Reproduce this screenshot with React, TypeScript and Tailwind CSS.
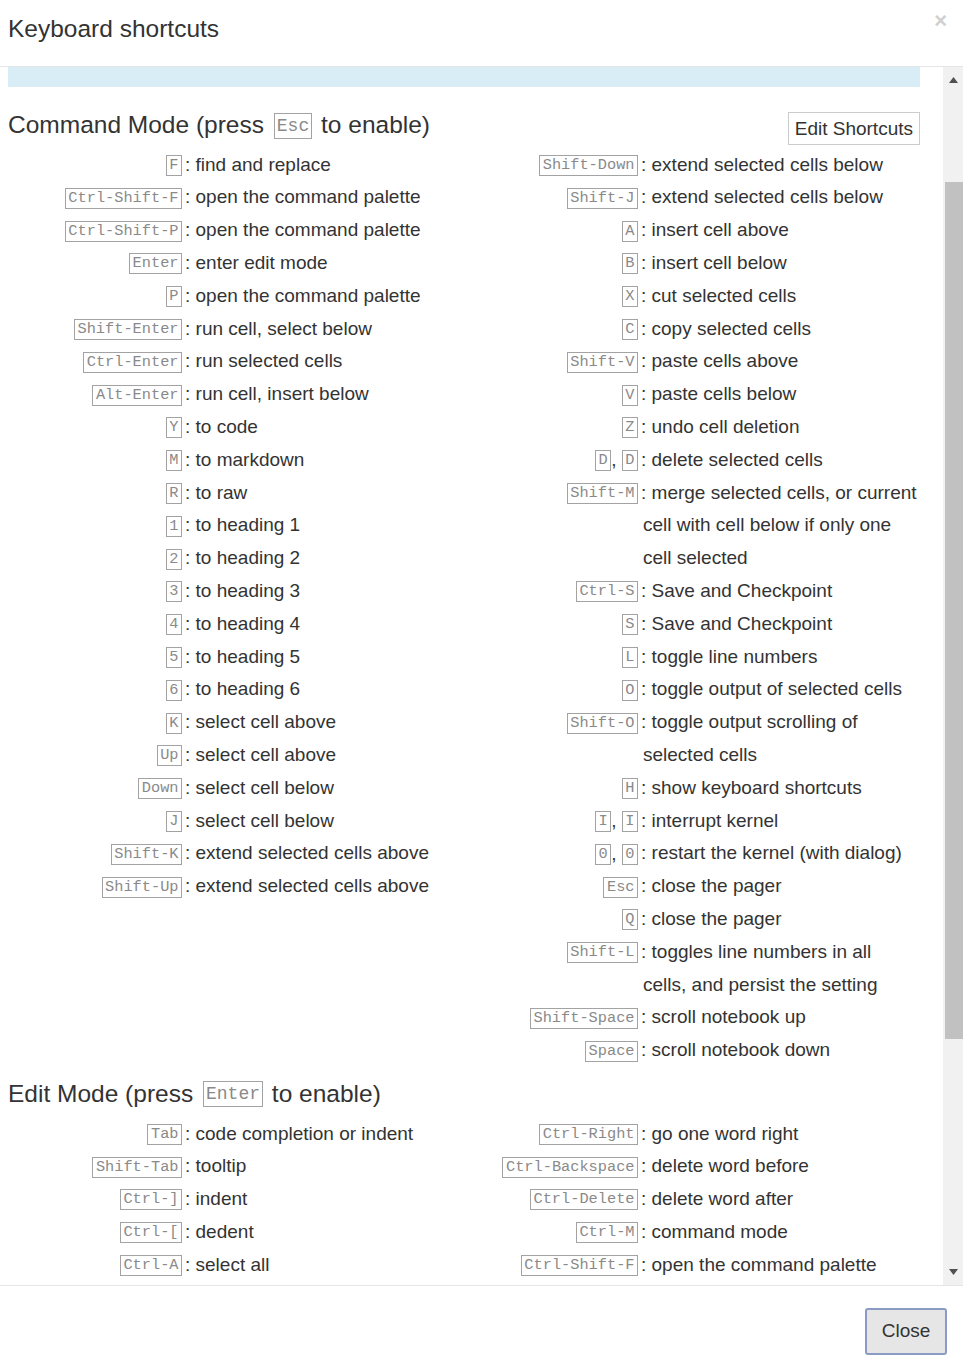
import React from "react";

type Row = { keys: string[]; desc: string[] };

const r = (keys: string[], ...desc: string[]): Row => ({ keys, desc });

const cmdLeft: Row[] = [
  r(["F"], "find and replace"),
  r(["Ctrl-Shift-F"], "open the command palette"),
  r(["Ctrl-Shift-P"], "open the command palette"),
  r(["Enter"], "enter edit mode"),
  r(["P"], "open the command palette"),
  r(["Shift-Enter"], "run cell, select below"),
  r(["Ctrl-Enter"], "run selected cells"),
  r(["Alt-Enter"], "run cell, insert below"),
  r(["Y"], "to code"),
  r(["M"], "to markdown"),
  r(["R"], "to raw"),
  r(["1"], "to heading 1"),
  r(["2"], "to heading 2"),
  r(["3"], "to heading 3"),
  r(["4"], "to heading 4"),
  r(["5"], "to heading 5"),
  r(["6"], "to heading 6"),
  r(["K"], "select cell above"),
  r(["Up"], "select cell above"),
  r(["Down"], "select cell below"),
  r(["J"], "select cell below"),
  r(["Shift-K"], "extend selected cells above"),
  r(["Shift-Up"], "extend selected cells above"),
];

const cmdRight: Row[] = [
  r(["Shift-Down"], "extend selected cells below"),
  r(["Shift-J"], "extend selected cells below"),
  r(["A"], "insert cell above"),
  r(["B"], "insert cell below"),
  r(["X"], "cut selected cells"),
  r(["C"], "copy selected cells"),
  r(["Shift-V"], "paste cells above"),
  r(["V"], "paste cells below"),
  r(["Z"], "undo cell deletion"),
  r(["D", "D"], "delete selected cells"),
  r(["Shift-M"], "merge selected cells, or current", "cell with cell below if only one", "cell selected"),
  r(["Ctrl-S"], "Save and Checkpoint"),
  r(["S"], "Save and Checkpoint"),
  r(["L"], "toggle line numbers"),
  r(["O"], "toggle output of selected cells"),
  r(["Shift-O"], "toggle output scrolling of", "selected cells"),
  r(["H"], "show keyboard shortcuts"),
  r(["I", "I"], "interrupt kernel"),
  r(["0", "0"], "restart the kernel (with dialog)"),
  r(["Esc"], "close the pager"),
  r(["Q"], "close the pager"),
  r(["Shift-L"], "toggles line numbers in all", "cells, and persist the setting"),
  r(["Shift-Space"], "scroll notebook up"),
  r(["Space"], "scroll notebook down"),
];

const editLeft: Row[] = [
  r(["Tab"], "code completion or indent"),
  r(["Shift-Tab"], "tooltip"),
  r(["Ctrl-]"], "indent"),
  r(["Ctrl-["], "dedent"),
  r(["Ctrl-A"], "select all"),
];

const editRight: Row[] = [
  r(["Ctrl-Right"], "go one word right"),
  r(["Ctrl-Backspace"], "delete word before"),
  r(["Ctrl-Delete"], "delete word after"),
  r(["Ctrl-M"], "command mode"),
  r(["Ctrl-Shift-F"], "open the command palette"),
];

const mono = { fontFamily: '"Liberation Mono", "DejaVu Sans Mono", monospace' };

function Kbd({ k }: { k: string }) {
  return (
    <span
      className="inline-block border border-[#a3a3a3] text-[#8a8a8a] text-[15.3px] leading-[19px] px-[2.5px] whitespace-pre"
      style={mono}
    >
      {k}
    </span>
  );
}

function ShortcutRow({ row }: { row: Row }) {
  return (
    <div className="flex">
      <div className="w-[174px] shrink-0 h-[32.8px] flex items-center justify-end pt-[1px]">
        {row.keys.map((k, i) => (
          <React.Fragment key={i}>
            {i > 0 && <span className="text-[#333] text-[19px] whitespace-pre">, </span>}
            <Kbd k={k} />
          </React.Fragment>
        ))}
      </div>
      <div className="flex-1 pl-[3px] flex flex-col text-[19px] text-[#333]">
        {row.desc.map((line, i) => (
          <div key={i} className={"h-[32.8px] leading-[32.8px] whitespace-pre " + (i > 0 ? "pl-[2px]" : "")}>
            {i === 0 ? ": " + line : line}
          </div>
        ))}
      </div>
    </div>
  );
}

function Column({ rows }: { rows: Row[] }) {
  return (
    <div className="w-[456px] flex flex-col">
      {rows.map((row, i) => (
        <ShortcutRow key={i} row={row} />
      ))}
    </div>
  );
}

function HeadKbd({ k }: { k: string }) {
  return (
    <span
      className="inline-block border border-[#a3a3a3] text-[#8a8a8a] text-[18px] leading-[24px] px-[2px] align-middle ml-[3px] mr-[2px] -mt-[2px]"
      style={mono}
    >
      {k}
    </span>
  );
}

export default function App() {
  return (
    <div
      className="w-[963px] h-[1366px] bg-white flex flex-col overflow-hidden"
      style={{ fontFamily: '"Liberation Sans", Arial, sans-serif' }}
    >
      {/* header */}
      <div className="h-[67px] shrink-0 border-b border-[#e5e5e5] flex items-start justify-between pl-[8px] pr-[16px]">
        <div className="mt-[15px] text-[24.5px] leading-[28px] text-[#333]">Keyboard shortcuts</div>
        <div className="mt-[9px] text-[22px] leading-[24px] font-bold text-[#d0d0d0]">×</div>
      </div>

      {/* body */}
      <div className="h-[1219px] shrink-0 flex border-b border-[#e5e5e5]">
        <div className="flex-1 pl-[8px] pr-[22px] overflow-hidden flex flex-col">
          <div className="h-[20px] shrink-0 bg-[#d9edf7] w-[912px]" />

          {/* command mode */}
          <div className="mt-[24px] h-[37.6px] flex items-start justify-between w-[912px]">
            <div className="text-[24.5px] leading-[28px] text-[#333] whitespace-pre">
              {"Command Mode (press "}
              <HeadKbd k="Esc" />
              {" to enable)"}
            </div>
            <div className="mt-[1px] h-[33px] border border-[#cccccc] px-[6px] text-[19px] leading-[31px] text-[#333] bg-white">
              Edit Shortcuts
            </div>
          </div>
          <div className="flex w-[912px]">
            <Column rows={cmdLeft} />
            <Column rows={cmdRight} />
          </div>

          {/* edit mode */}
          <div className="mt-[13px] mb-[9.6px] text-[24.5px] leading-[28px] text-[#333] whitespace-pre">
            {"Edit Mode (press "}
            <HeadKbd k="Enter" />
            {" to enable)"}
          </div>
          <div className="flex w-[912px]">
            <Column rows={editLeft} />
            <Column rows={editRight} />
          </div>
        </div>

        {/* scrollbar */}
        <div className="w-[20px] shrink-0 bg-[#f1f1f1] flex flex-col items-stretch">
          <div className="h-[26px] flex items-center justify-center">
            <svg width="9" height="6" viewBox="0 0 9 6">
              <path d="M0 6 L4.5 0 L9 6 Z" fill="#505050" />
            </svg>
          </div>
          <div className="h-[89px]" />
          <div className="h-[857px] bg-[#c1c1c1] ml-[2px]" />
          <div className="flex-1" />
          <div className="h-[26px] flex items-center justify-center">
            <svg width="9" height="6" viewBox="0 0 9 6">
              <path d="M0 0 L9 0 L4.5 6 Z" fill="#505050" />
            </svg>
          </div>
        </div>
      </div>

      {/* footer */}
      <div className="flex-1 flex justify-end items-start pr-[16px] pt-[22px]">
        <div className="w-[82px] h-[47px] rounded-[3px] border-2 border-[#8b9cc4] bg-[#e6e6e6] flex items-center justify-center text-[19px] text-[#333]">
          Close
        </div>
      </div>
    </div>
  );
}
